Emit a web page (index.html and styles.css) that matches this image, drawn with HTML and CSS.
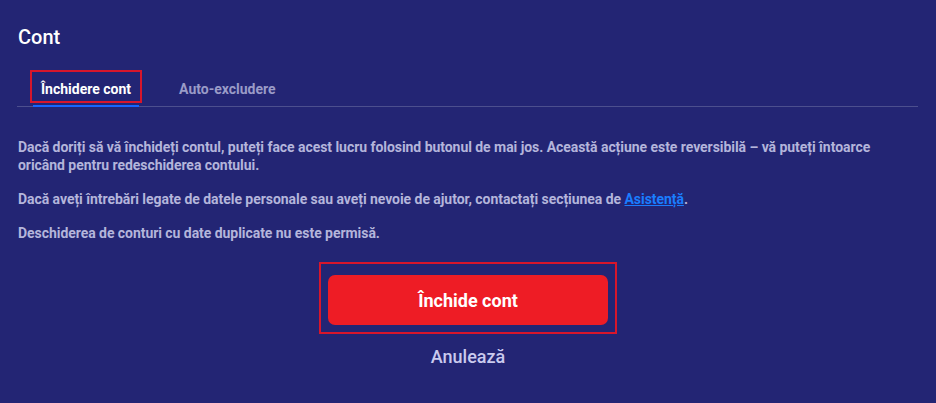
FILE: index.html
```html
<!DOCTYPE html>
<html lang="ro">
  <head>
    <meta charset="UTF-8" />
    <meta name="viewport" content="width=device-width, initial-scale=1.0" />
    <title>Cont</title>
    <link rel="stylesheet" href="styles.css">
  </head>
  <body>
    <div class="container">
      <h1 class="title">Cont</h1>

      <div class="tabs">
        <div class="tab active">
          Închidere cont
          <span class="mark"></span>
        </div>
        <div class="tab">Auto-excludere</div>
      </div>

      <div class="content">
        <p>Dacă doriți să vă închideți contul, puteți face acest lucru folosind butonul de mai jos. Această acțiune este reversibilă – vă puteți întoarce oricând pentru redeschiderea contului.</p>
        <p>Dacă aveți întrebări legate de datele personale sau aveți nevoie de ajutor, contactați secțiunea de <a href="#" class="link">Asistență</a>.</p>
        <p>Deschiderea de conturi cu date duplicate nu este permisă.</p>
      </div>

      <div class="actions">
        <div class="btn-wrap">
          <button class="btn">Închide cont</button>
        </div>
        <div class="cancel">Anulează</div>
      </div>
    </div>
  </body>
</html>
```

FILE: styles.css
```css
body {
  margin: 0;
  padding: 0;
  background-color: #232574;
  font-family: "Roboto", "Liberation Sans", sans-serif;
  overflow: hidden;
}

.container {
  padding: 25px 18px 0 18px;
}

.title {
  margin: 0;
  font-size: 20px;
  font-weight: 500;
  line-height: 24px;
  color: #ffffff;
}

.tabs {
  display: flex;
  margin-top: 23px;
  margin-left: -1px;
  border-bottom: 1px solid #4c4f8e;
}

.tab {
  position: relative;
  display: flex;
  align-items: center;
  height: 33px;
  padding: 0 8px;
  margin-left: 16px;
  margin-bottom: -1px;
  font-size: 14px;
  font-weight: 700;
  color: #9a9bc7;
  border-bottom: 2px solid transparent;
}

.tab + .tab {
  margin-left: 32px;
}

.tab.active {
  color: #ffffff;
  border-bottom-color: #1565ff;
}

.mark {
  position: absolute;
  left: -3px;
  right: -3px;
  top: -2px;
  bottom: 2px;
  border: 2px solid #d8162b;
}

.content {
  padding-top: 31px;
}

.content p {
  margin: 0 0 16px 0;
  font-size: 14px;
  font-weight: 700;
  line-height: 18px;
  letter-spacing: -0.05px;
  color: #b4b5db;
}

.link {
  color: #1a7dff;
  text-decoration: underline;
}

.actions {
  display: flex;
  flex-direction: column;
  align-items: center;
  padding-top: 4px;
}

.btn-wrap {
  padding: 11px 7px 7px 7px;
  border: 2px solid #d8162b;
}

.btn {
  display: block;
  width: 280px;
  height: 50px;
  border: none;
  border-radius: 7px;
  background-color: #ee1c25;
  color: #ffffff;
  font-family: "Roboto", "Liberation Sans", sans-serif;
  font-size: 18px;
  font-weight: 700;
  cursor: pointer;
}

.cancel {
  margin-top: 12px;
  font-size: 18px;
  font-weight: 500;
  line-height: 22px;
  color: #c9caee;
}
```
